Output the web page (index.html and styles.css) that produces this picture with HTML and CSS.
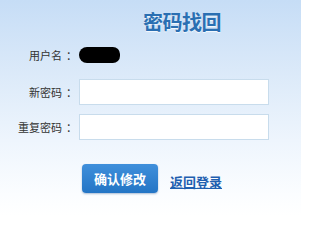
FILE: index.html
```html
<!DOCTYPE html>
<html lang="zh-CN">
<head>
<meta charset="utf-8">
<title>密码找回</title>
<link rel="stylesheet" href="styles.css">
</head>
<body>
<div class="page">
  <h1 class="title">密码找回</h1>
  <form class="form">
    <div class="row row-user">
      <label class="label">用户名<span class="colon">：</span></label>
      <span class="mask"></span>
    </div>
    <div class="row row-new">
      <label class="label">新密码<span class="colon">：</span></label>
      <input class="input" type="password">
    </div>
    <div class="row row-repeat">
      <label class="label">重复密码<span class="colon">：</span></label>
      <input class="input" type="password">
    </div>
    <div class="actions">
      <button class="btn" type="button">确认修改</button>
      <a class="back" href="#">返回登录</a>
    </div>
  </form>
</div>
</body>
</html>
```
FILE: styles.css
```css
html, body {
  margin: 0;
  padding: 0;
}
body {
  font-family: "Noto Sans CJK SC", "Noto Sans", sans-serif;
}
.page {
  width: 301px;
  height: 216px;
  box-sizing: border-box;
  padding-top: 12px;
  background: linear-gradient(#c6ddf6 0%, #dceaf9 35%, #eef5fd 65%, #fbfdff 90%, #ffffff 100%);
  overflow: hidden;
}
.title {
  margin: 0 0 0 143px;
  font-size: 20px;
  line-height: 20px;
  font-weight: bold;
  color: #2a6fb2;
  text-shadow: 0 1px 1px rgba(255,255,255,0.8);
  letter-spacing: -0.5px;
}
.form {
  margin: 15px 0 0 0;
  display: flex;
  flex-direction: column;
}
.row {
  display: flex;
  align-items: center;
  gap: 6px;
}
.row-new {
  margin-top: 16px;
}
.row-repeat {
  margin-top: 9px;
}
.label {
  width: 73px;
  flex: none;
  font-size: 11px;
  line-height: 14px;
  color: #333;
  text-align: right;
}
.colon {
  margin-left: 4px;
  margin-right: -4px;
}
.mask {
  width: 41px;
  height: 16px;
  background: #000;
  border-radius: 9px 8px 8px 9px;
}
.input {
  width: 190px;
  height: 26px;
  box-sizing: border-box;
  border: 1px solid #c8dcec;
  background: #fff;
  margin: 0;
  padding: 0 4px;
  outline: none;
}
.actions {
  margin-top: 24px;
  margin-left: 82px;
  display: flex;
  align-items: flex-start;
}
.btn {
  width: 76px;
  height: 29px;
  border: none;
  border-radius: 4px;
  background: linear-gradient(#3f8fdb, #2475c5);
  box-shadow: 0 1px 2px rgba(20,70,130,0.35);
  color: #fff;
  font-family: "Noto Sans CJK SC", sans-serif;
  font-size: 13px;
  font-weight: bold;
  padding: 0;
  line-height: 29px;
}
.back {
  margin-left: 12px;
  margin-top: 11px;
  font-size: 13px;
  line-height: 14px;
  font-weight: bold;
  color: #1f5fb0;
  text-decoration: underline;
}
```
